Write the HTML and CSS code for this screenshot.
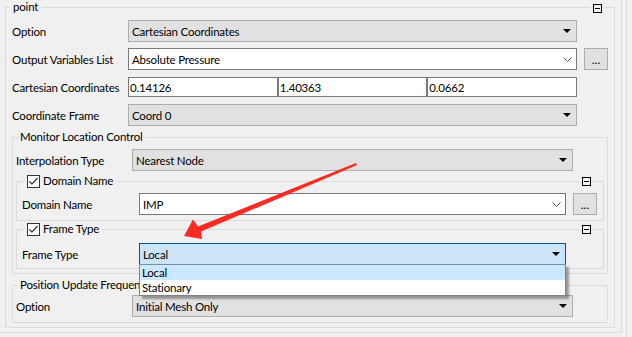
FILE: index.html
```html
<!DOCTYPE html>
<html lang="en">
<head>
  <meta charset="UTF-8" />
  <title>Monitor Point</title>
  <link rel="stylesheet" href="styles.css">
</head>
<body>
  <div class="window">
    <div class="panel">
      <fieldset class="group point">
        <legend>point</legend>
        <span class="collapse"></span>

        <div class="row">
          <label>Option</label>
          <div class="select"><span>Cartesian Coordinates</span><i class="caret"></i></div>
        </div>
        <div class="row">
          <label>Output Variables List</label>
          <div class="combo"><span>Absolute Pressure</span>
            <svg class="chevron" width="9" height="5" viewBox="0 0 9 5"><polyline points="0.5,0.5 4.5,4.5 8.5,0.5" fill="none" stroke="#555" stroke-width="1"/></svg>
          </div>
          <button class="more">...</button>
        </div>
        <div class="row">
          <label>Cartesian Coordinates</label>
          <div class="triple">
            <div class="field">0.14126</div>
            <div class="field">1.40363</div>
            <div class="field">0.0662</div>
          </div>
        </div>
        <div class="row">
          <label>Coordinate Frame</label>
          <div class="select"><span>Coord 0</span><i class="caret"></i></div>
        </div>

        <fieldset class="group monitor">
          <legend>Monitor Location Control</legend>
          <div class="row">
            <label>Interpolation Type</label>
            <div class="select"><span>Nearest Node</span><i class="caret"></i></div>
          </div>

          <fieldset class="group sub domain">
            <legend><span class="check"><svg width="13" height="13" viewBox="0 0 13 13"><rect x="0.5" y="0.5" width="12" height="12" fill="#fff" stroke="#333"/><polyline points="2.5,6.5 5,9 10.5,3" fill="none" stroke="#333" stroke-width="1.2"/></svg></span>Domain Name</legend>
            <span class="collapse"></span>
            <div class="row wide">
              <label>Domain Name</label>
              <div class="combo"><span>IMP</span>
                <svg class="chevron" width="9" height="5" viewBox="0 0 9 5"><polyline points="0.5,0.5 4.5,4.5 8.5,0.5" fill="none" stroke="#555" stroke-width="1"/></svg>
              </div>
              <button class="more">...</button>
            </div>
          </fieldset>

          <fieldset class="group sub frame">
            <legend><span class="check"><svg width="13" height="13" viewBox="0 0 13 13"><rect x="0.5" y="0.5" width="12" height="12" fill="#fff" stroke="#333"/><polyline points="2.5,6.5 5,9 10.5,3" fill="none" stroke="#333" stroke-width="1.2"/></svg></span>Frame Type</legend>
            <span class="collapse"></span>
            <div class="row wide">
              <label>Frame Type</label>
              <div class="select open"><span>Local</span><i class="caret"></i>
                <ul class="dropdown">
                  <li class="current">Local</li>
                  <li>Stationary</li>
                </ul>
              </div>
            </div>
          </fieldset>
        </fieldset>

        <fieldset class="group position">
          <legend>Position Update Frequency</legend>
          <div class="row">
            <label>Option</label>
            <div class="select"><span>Initial Mesh Only</span><i class="caret"></i></div>
          </div>
        </fieldset>
      </fieldset>
    </div>
    <div class="edge"></div>

    <svg class="annotation" width="632" height="337" viewBox="0 0 632 337">
      <polygon points="356,163 357,165 201,231.5 202,239 184,236 193,219.5 198,226.5" fill="#fb2a22"/>
    </svg>
  </div>
</body>
</html>
```

FILE: styles.css
```css
* {
  box-sizing: border-box;
}
body {
  margin: 0;
  background: #f0f0f0;
  font-family: Lato, "Liberation Sans", sans-serif;
  font-size: 11.5px;
  letter-spacing: -0.2px;
  color: #000;
}
.window {
  position: relative;
  display: flex;
  width: 632px;
  height: 337px;
  overflow: hidden;
}
.panel {
  width: 622px;
  height: 333px;
  padding: 0 6px 0 5px;
  border-right: 1px solid #dcdcdc;
  border-bottom: 1px solid #dcdcdc;
}
.edge {
  width: 5px;
  height: 337px;
  border-right: 1px solid #dcdcdc;
}

/* group boxes */
.group {
  position: relative;
  margin: 0;
  min-width: 0;
  border: 1px solid #dcdcdc;
}
.group legend {
  display: flex;
  align-items: center;
  height: 14px;
  line-height: 14px;
  padding: 0 2px;
  margin-left: 2px;
}
.point {
  padding: 3px 6px 4px 6px;
}
.point > legend {
  margin-left: -2px;
  padding: 0 3px;
}
.monitor {
  margin-top: 1px;
  padding: 2px 3px 4px 3px;
}
.position {
  margin-top: 4px;
  padding: 0 3px 2px 3px;
}
.sub {
  padding: 0 6px 0 5px;
}
.sub legend {
  padding: 0 3px;
}
.domain {
  padding-top: 2px;
  padding-bottom: 2px;
}
.frame {
  margin-top: 1px;
  padding-top: 4px;
}
.check {
  display: flex;
  width: 13px;
  height: 13px;
  margin-right: 3px;
}
.collapse {
  position: absolute;
  top: -11px;
  right: 12px;
  width: 9px;
  height: 9px;
  border: 1px solid #000;
  background: #f0f0f0;
  box-shadow: 0 0 0 2px #f0f0f0;
}
.collapse::after {
  content: "";
  position: absolute;
  left: 1px;
  right: 1px;
  top: 3px;
  height: 1px;
  background: #000;
}
.point > .collapse {
  top: -10px;
  right: 12px;
}

/* rows */
.row {
  display: grid;
  grid-template-columns: 116px 1fr 31px;
  align-items: center;
  height: 28px;
}
.row.wide {
  grid-template-columns: 117px 1fr 31px;
}
.row label {
  white-space: nowrap;
}
.select, .combo {
  position: relative;
  display: flex;
  align-items: center;
  height: 22px;
  padding-left: 3px;
  border: 1px solid #adadad;
  background: #e1e1e1;
  white-space: nowrap;
}
.combo {
  border-color: #7a7a7a;
  background: #fff;
}
.caret {
  margin-left: auto;
  margin-right: 5px;
  width: 0;
  height: 0;
  border-left: 4px solid transparent;
  border-right: 4px solid transparent;
  border-top: 4px solid #000;
}
.chevron {
  margin-left: auto;
  margin-right: 4px;
}
.more {
  justify-self: end;
  width: 24px;
  height: 22px;
  padding: 0;
  border: 1px solid #adadad;
  background: #e1e1e1;
  font-family: inherit;
  font-size: 12px;
  color: #000;
}
.triple {
  display: flex;
  height: 20px;
}
.field {
  flex: 1;
  display: flex;
  align-items: center;
  padding-left: 1px;
  border: 1px solid #7a7a7a;
  background: #fff;
}

/* open frame type list */
.select.open {
  border-color: #005499;
  background: #cce4f7;
}
.dropdown {
  position: absolute;
  z-index: 2;
  top: 20px;
  left: -1px;
  right: -1px;
  margin: 0;
  padding: 0;
  list-style: none;
  border: 1px solid #828282;
  border-top-color: #7a8ea0;
  background: #fff;
  box-shadow: 3px 3px 2px rgba(0, 0, 0, 0.35);
}
.dropdown li {
  height: 15px;
  line-height: 15px;
  padding-left: 2px;
}
.dropdown li.current {
  background: #cce8ff;
}

.annotation {
  position: absolute;
  left: 0;
  top: 0;
  z-index: 3;
  pointer-events: none;
}
```
